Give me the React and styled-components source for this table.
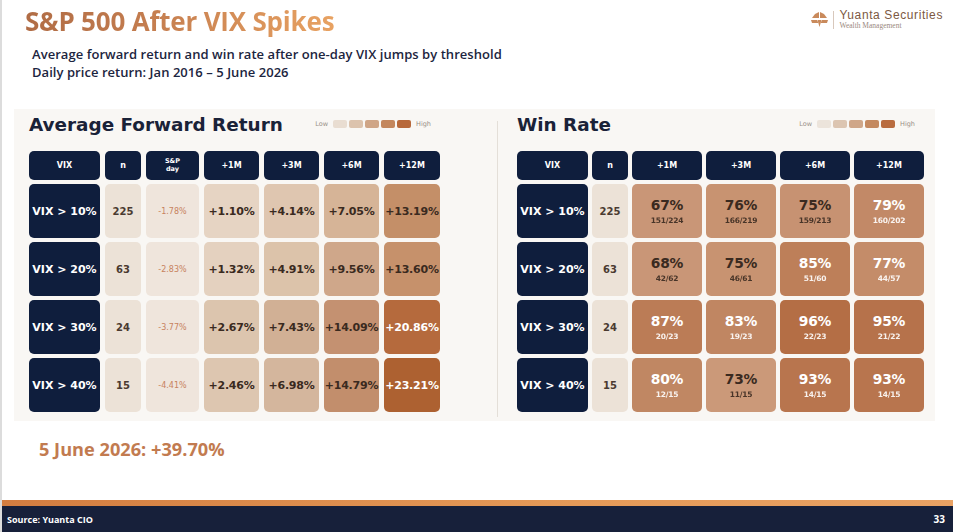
import React from "react";
import styled, { createGlobalStyle } from "styled-components";

const Global = createGlobalStyle`
  html, body { margin: 0; padding: 0; background: #ffffff; }
  #root { width: 953px; height: 532px; }
`;

const Page = styled.div`
  width: 953px;
  height: 532px;
  display: flex;
  flex-direction: column;
  background: #ffffff;
  border-left: 2px solid #dcdcdc;
  box-sizing: border-box;
  overflow: hidden;
  font-family: "Open Sans", "Noto Sans", sans-serif;
`;

const Top = styled.header`
  display: flex;
  justify-content: space-between;
  align-items: flex-start;
  padding: 5px 10px 0 23px;
`;

const Title = styled.h1`
  margin: 0;
  font-size: 26px;
  line-height: 32px;
  font-weight: 700;
  letter-spacing: -0.2px;
  background: linear-gradient(90deg, #b06c45 0%, #c47d4f 40%, #e8a262 100%);
  -webkit-background-clip: text;
  background-clip: text;
  color: transparent;
`;

const Logo = styled.div`
  display: flex;
  align-items: center;
  gap: 5px;
  margin-top: 4px;
`;

const LogoRule = styled.div`
  width: 1px;
  height: 18px;
  background: #d8c8bc;
`;

const LogoText = styled.div`
  display: flex;
  flex-direction: column;
`;

const LogoName = styled.span`
  font-family: "Liberation Sans", Arial, sans-serif;
  font-size: 12px;
  line-height: 12px;
  color: #7d5842;
  letter-spacing: 0.6px;
`;

const LogoSub = styled.span`
  font-family: "Liberation Serif", "Times New Roman", serif;
  font-size: 7.5px;
  line-height: 9px;
  color: #9a8a80;
`;

const Subtitle = styled.div`
  padding: 8px 0 0 30px;
  display: flex;
  flex-direction: column;
`;

const SubLine = styled.div`
  font-size: 13px;
  line-height: 18px;
  font-weight: 600;
  color: #1c2540;
  white-space: nowrap;
  letter-spacing: 0.05px;
`;

const Panel = styled.section`
  margin: 28px 18px 0 12px;
  height: 312px;
  background: #f9f7f4;
  display: flex;
  box-sizing: border-box;
  padding: 4px 0 0 15px;
`;

const Section = styled.div`
  display: flex;
  flex-direction: column;
`;

const Divider = styled.div`
  width: 1px;
  background: #e4dfd8;
  margin: 8px 19px 4px 57px;
`;

const SectionHead = styled.div`
  display: flex;
  align-items: center;
  justify-content: space-between;
  height: 22px;
  margin-bottom: 16px;
`;

const SectionTitle = styled.h2`
  margin: 0;
  font-family: "DejaVu Sans", sans-serif;
  font-weight: 700;
  font-size: 18.4px;
  color: #1a2238;
`;

const Legend = styled.div`
  display: flex;
  align-items: center;
  gap: 2px;
  font-family: "DejaVu Sans", sans-serif;
  font-size: 6.5px;
  color: #9a9088;
  margin-right: 6px;
`;

const LegendLabel = styled.span`
  margin: 0 3px;
`;

const Swatch = styled.span`
  width: 14px;
  height: 8px;
  border-radius: 2px;
  background: ${(p) => p.$c};
`;

const Grid = styled.div`
  display: grid;
  grid-template-columns: ${(p) => p.$cols};
  grid-template-rows: 29px repeat(4, 54px);
  column-gap: ${(p) => p.$gap}px;
  row-gap: 4px;
`;

const Cell = styled.div`
  border-radius: 5px;
  display: flex;
  flex-direction: column;
  align-items: center;
  justify-content: center;
  font-family: "DejaVu Sans", sans-serif;
  font-weight: 700;
  box-sizing: border-box;
  white-space: nowrap;
`;

const Head = styled(Cell)`
  background: #0f1e3d;
  color: #ffffff;
  font-size: 8px;
  line-height: 9px;
`;

const HeadSmall = styled.span`
  font-size: 6.5px;
  line-height: 7.5px;
`;

const RowLabel = styled(Cell)`
  background: #0f1e3d;
  color: #ffffff;
  font-size: 11px;
`;

const NCell = styled(Cell)`
  background: #ece2d7;
  color: #4a3a30;
  font-size: 10px;
`;

const DayCell = styled(Cell)`
  background: #efe5dc;
  color: #c7825e;
  font-weight: 400;
  font-size: 8px;
`;

const Value = styled(Cell)`
  background: ${(p) => p.$bg};
  color: ${(p) => (p.$light ? "#ffffff" : "#3a2a20")};
  font-size: 11px;
  letter-spacing: -0.2px;
`;

const Pct = styled.span`
  font-size: 13.8px;
  line-height: 16px;
`;

const Frac = styled.span`
  font-size: 7.5px;
  line-height: 9px;
  margin-top: 3px;
  opacity: 0.9;
`;

const Note = styled.div`
  margin: 16px 0 0 37px;
  font-size: 18.2px;
  font-weight: 700;
  color: #c27b50;
  line-height: 24px;
`;

const Spacer = styled.div`
  flex: 1;
`;

const FooterLine = styled.div`
  height: 6px;
  background: linear-gradient(90deg, #d37d40 0%, #e59a58 60%, #e9a264 100%);
`;

const Footer = styled.footer`
  height: 26px;
  background: #17203a;
  display: flex;
  align-items: center;
  justify-content: space-between;
  padding: 0 8px 0 5px;
  color: #ffffff;
  font-size: 9px;
  font-weight: 700;
`;

const PageNum = styled.span`
  font-size: 10px;
`;

const LogoMark = () => (
  <svg width="17" height="15" viewBox="0 0 17 15">
    <g fill="#c98a5c">
      <polygon points="8,0 8,6 1,6 4,2" />
      <polygon points="9,0 9,6 16,6 13,2" />
      <polygon points="0,8 6,8 7.5,11 1,11" />
      <polygon points="17,8 11,8 9.5,11 16,11" />
      <polygon points="6.5,8 10.5,8 8.5,15" />
    </g>
  </svg>
);

const leftLegend = ["#e9ddd1", "#dcc3ad", "#cfa586", "#c4875d", "#b8693b"];
const rightLegend = ["#ece4db", "#dcc5b1", "#cfa688", "#c4895f", "#b96c3f"];

const leftRows = [
  {
    vix: "VIX > 10%", n: 225, day: "-1.78%",
    vals: [["+1.10%", "#e6d4c3"], ["+4.14%", "#dfc6b0"], ["+7.05%", "#d6b497"], ["+13.19%", "#c48f68"]],
  },
  {
    vix: "VIX > 20%", n: 63, day: "-2.83%",
    vals: [["+1.32%", "#e4d1bf"], ["+4.91%", "#dcc3aa"], ["+9.56%", "#cfa78a"], ["+13.60%", "#c6916b"]],
  },
  {
    vix: "VIX > 30%", n: 24, day: "-3.77%",
    vals: [["+2.67%", "#dcc5ae"], ["+7.43%", "#d1b095"], ["+14.09%", "#c49171"], ["+20.86%", "#b56a3d", true]],
  },
  {
    vix: "VIX > 40%", n: 15, day: "-4.41%",
    vals: [["+2.46%", "#ddc6b0"], ["+6.98%", "#d4b69d"], ["+14.79%", "#c28e6c"], ["+23.21%", "#ad6131", true]],
  },
];

const rightRows = [
  {
    vix: "VIX > 10%", n: 225,
    vals: [["67%", "151/224", "#c99677"], ["76%", "166/219", "#c89371"], ["75%", "159/213", "#c79272"], ["79%", "160/202", "#c28967", true]],
  },
  {
    vix: "VIX > 20%", n: 63,
    vals: [["68%", "42/62", "#c99677"], ["75%", "46/61", "#c89371"], ["85%", "51/60", "#bd7f59", true], ["77%", "44/57", "#c48c69", true]],
  },
  {
    vix: "VIX > 30%", n: 24,
    vals: [["87%", "20/23", "#bb7c56", true], ["83%", "19/23", "#c08662", true], ["96%", "22/23", "#b46e45", true], ["95%", "21/22", "#b6724b", true]],
  },
  {
    vix: "VIX > 40%", n: 15,
    vals: [["80%", "12/15", "#c08763", true], ["73%", "11/15", "#cb9979"], ["93%", "14/15", "#b8754e", true], ["93%", "14/15", "#b8754e", true]],
  },
];

const LegendBar = ({ colors }) => (
  <Legend>
    <LegendLabel>Low</LegendLabel>
    {colors.map((c) => (
      <Swatch key={c} $c={c} />
    ))}
    <LegendLabel>High</LegendLabel>
  </Legend>
);

export default function App() {
  return (
    <>
      <Global />
      <Page>
        <Top>
          <Title>S&amp;P 500 After VIX Spikes</Title>
          <Logo>
            <LogoMark />
            <LogoRule />
            <LogoText>
              <LogoName>Yuanta Securities</LogoName>
              <LogoSub>Wealth Management</LogoSub>
            </LogoText>
          </Logo>
        </Top>
        <Subtitle>
          <SubLine>Average forward return and win rate after one-day VIX jumps by threshold</SubLine>
          <SubLine>Daily price return: Jan 2016 – 5 June 2026</SubLine>
        </Subtitle>
        <Panel>
          <Section>
            <SectionHead>
              <SectionTitle>Average Forward Return</SectionTitle>
              <LegendBar colors={leftLegend} />
            </SectionHead>
            <Grid $cols="71px 36px 53px 55px 55px 55px 56px" $gap={5}>
              <Head>VIX</Head>
              <Head>n</Head>
              <Head>
                <HeadSmall>S&amp;P</HeadSmall>
                <HeadSmall>day</HeadSmall>
              </Head>
              <Head>+1M</Head>
              <Head>+3M</Head>
              <Head>+6M</Head>
              <Head>+12M</Head>
              {leftRows.map((r) => (
                <React.Fragment key={r.vix}>
                  <RowLabel>{r.vix}</RowLabel>
                  <NCell>{r.n}</NCell>
                  <DayCell>{r.day}</DayCell>
                  {r.vals.map(([v, bg, light], i) => (
                    <Value key={i} $bg={bg} $light={light}>
                      {v}
                    </Value>
                  ))}
                </React.Fragment>
              ))}
            </Grid>
          </Section>
          <Divider />
          <Section>
            <SectionHead>
              <SectionTitle>Win Rate</SectionTitle>
              <LegendBar colors={rightLegend} />
            </SectionHead>
            <Grid $cols="71px 36px 70px 70px 70px 70px" $gap={4}>
              <Head>VIX</Head>
              <Head>n</Head>
              <Head>+1M</Head>
              <Head>+3M</Head>
              <Head>+6M</Head>
              <Head>+12M</Head>
              {rightRows.map((r) => (
                <React.Fragment key={r.vix}>
                  <RowLabel>{r.vix}</RowLabel>
                  <NCell>{r.n}</NCell>
                  {r.vals.map(([p, f, bg, light], i) => (
                    <Value key={i} $bg={bg} $light={light}>
                      <Pct>{p}</Pct>
                      <Frac>{f}</Frac>
                    </Value>
                  ))}
                </React.Fragment>
              ))}
            </Grid>
          </Section>
        </Panel>
        <Note>5 June 2026: +39.70%</Note>
        <Spacer />
        <FooterLine />
        <Footer>
          <span>Source: Yuanta CIO</span>
          <PageNum>33</PageNum>
        </Footer>
      </Page>
    </>
  );
}
